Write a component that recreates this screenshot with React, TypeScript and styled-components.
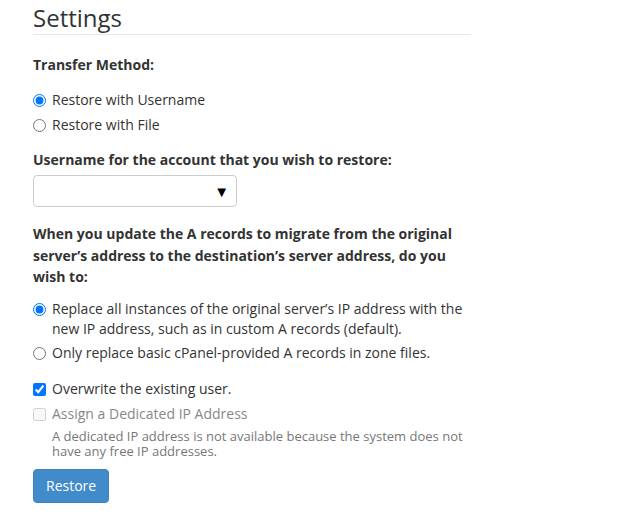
import React from 'react';
import styled, { createGlobalStyle } from 'styled-components';

const GlobalStyle = createGlobalStyle`
  body {
    margin: 0;
    background: #fff;
    font-family: "Open Sans", "Liberation Sans", sans-serif;
    font-size: 14px;
    color: #333;
  }
`;

const Page = styled.div`
  width: 438px;
  padding: 5px 0 14px 33px;
`;

const Title = styled.h2`
  margin: 0;
  padding-bottom: 3px;
  font-size: 24px;
  font-weight: 400;
  line-height: 26px;
  border-bottom: 1px solid #e6e6e6;
`;

const FieldLabel = styled.div<{ $top: number; $lh?: number }>`
  margin-top: ${(p) => p.$top}px;
  font-weight: 700;
  line-height: ${(p) => p.$lh || 20}px;
`;

const OptionList = styled.div<{ $top: number; $gap?: number }>`
  display: flex;
  flex-direction: column;
  gap: ${(p) => p.$gap ?? 5}px;
  margin-top: ${(p) => p.$top}px;
`;

const Option = styled.label<{ $disabled?: boolean }>`
  display: flex;
  align-items: flex-start;
  gap: 6px;
  line-height: 20px;
  color: ${(p) => (p.$disabled ? '#888' : '#333')};
`;

const Radio = styled.input.attrs({ type: 'radio' })`
  width: 13px;
  height: 13px;
  margin: 4px 0 0 0;
  flex: none;
`;

const Check = styled.input.attrs({ type: 'checkbox' })`
  width: 13px;
  height: 13px;
  margin: 4px 0 0 0;
  flex: none;
`;

const HelpText = styled.div`
  margin: 5px 0 0 19px;
  font-size: 13px;
  line-height: 15px;
  color: #777;
`;

const SelectWrap = styled.div`
  position: relative;
  width: 204px;
  margin-top: 5px;
`;

const Select = styled.div`
  box-sizing: border-box;
  height: 32px;
  border: 1px solid #ccc;
  border-radius: 4px;
  background: #fff;
`;

const Arrow = styled.span`
  position: absolute;
  right: 8px;
  top: 8px;
  font-size: 15px;
  line-height: 16px;
  color: #000;
`;

const Button = styled.button`
  margin-top: 10px;
  height: 34px;
  padding: 0 12px;
  border: 1px solid #3c82c4;
  border-radius: 4px;
  background: #428bca;
  color: #fff;
  font-family: inherit;
  font-size: 14px;
`;

export default function App() {
  return (
    <>
      <GlobalStyle />
      <Page>
        <Title>Settings</Title>
        <FieldLabel $top={20}>Transfer Method:</FieldLabel>
        <OptionList $top={15}>
          <Option>
            <Radio name="method" defaultChecked />
            Restore with Username
          </Option>
          <Option>
            <Radio name="method" />
            Restore with File
          </Option>
        </OptionList>
        <FieldLabel $top={15}>Username for the account that you wish to restore:</FieldLabel>
        <SelectWrap>
          <Select />
          <Arrow>▼</Arrow>
        </SelectWrap>
        <FieldLabel $top={16} $lh={21.5}>
          When you update the A records to migrate from the original server’s address to the
          destination’s server address, do you wish to:
        </FieldLabel>
        <OptionList $top={11} $gap={4}>
          <Option>
            <Radio name="records" defaultChecked />
            <span>
              Replace all instances of the original server’s IP address with the new IP address,
              such as in custom A records (default).
            </span>
          </Option>
          <Option>
            <Radio name="records" />
            Only replace basic cPanel-provided A records in zone files.
          </Option>
        </OptionList>
        <OptionList $top={16}>
          <Option>
            <Check defaultChecked />
            Overwrite the existing user.
          </Option>
          <Option $disabled>
            <Check disabled />
            Assign a Dedicated IP Address
          </Option>
        </OptionList>
        <HelpText>
          A dedicated IP address is not available because the system does not have any free IP
          addresses.
        </HelpText>
        <Button>Restore</Button>
      </Page>
    </>
  );
}
